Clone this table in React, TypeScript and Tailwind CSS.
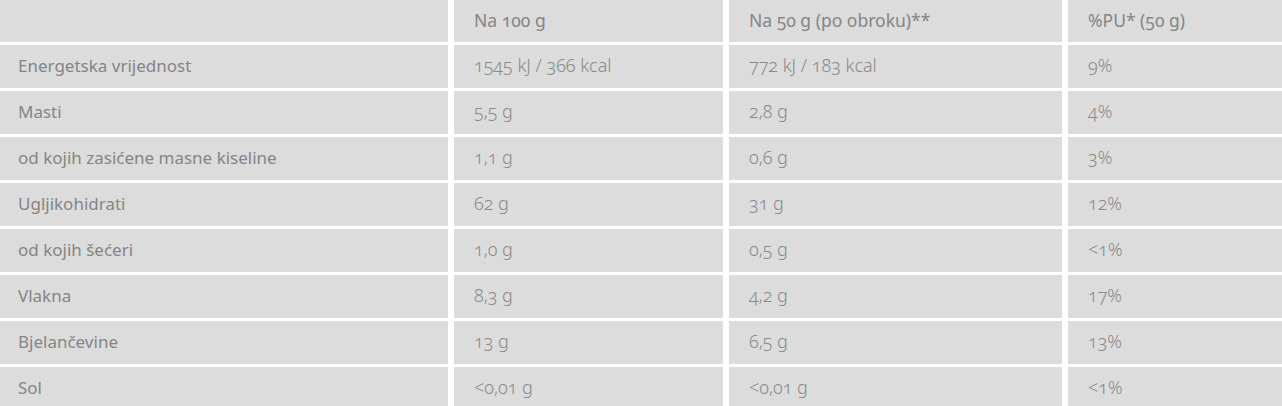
import React from "react";

const rows: [string, string, string, string][] = [
  ["Energetska vrijednost", "1545 kJ / 366 kcal", "772 kJ / 183 kcal", "9%"],
  ["Masti", "5,5 g", "2,8 g", "4%"],
  ["od kojih zasićene masne kiseline", "1,1 g", "0,6 g", "3%"],
  ["Ugljikohidrati", "62 g", "31 g", "12%"],
  ["od kojih šećeri", "1,0 g", "0,5 g", "<1%"],
  ["Vlakna", "8,3 g", "4,2 g", "17%"],
  ["Bjelančevine", "13 g", "6,5 g", "13%"],
  ["Sol", "<0,01 g", "<0,01 g", "<1%"],
];

const header = ["", "Na 100 g", "Na 50 g (po obroku)**", "%PU* (50 g)"];

export default function App() {
  return (
    <div className="w-[1282px] bg-white font-['Noto_Sans',sans-serif] oldstyle-nums">
      <div className="grid grid-cols-[448px_269px_333px_214px] gap-x-[6px] gap-y-[3px]">
        {header.map((h, i) => (
          <div
            key={"h" + i}
            className={`h-[42px] bg-[#dcdcdc] flex items-center pb-[2px] text-[17.5px] text-[#858585] ${i === 0 ? "pl-[18px]" : "pl-[20px]"}`}
          >
            {h}
          </div>
        ))}
        {rows.map((r, ri) =>
          r.map((c, ci) => (
            <div
              key={ri + "-" + ci}
              className={`h-[43px] bg-[#dcdcdc] flex items-center pb-[2px] ${ci === 0 ? "pl-[18px] text-[17px] text-[#858585]" : "pl-[20px] text-[18px] font-light text-[#8a8a8a]"}`}
            >
              {c}
            </div>
          ))
        )}
      </div>
    </div>
  );
}
